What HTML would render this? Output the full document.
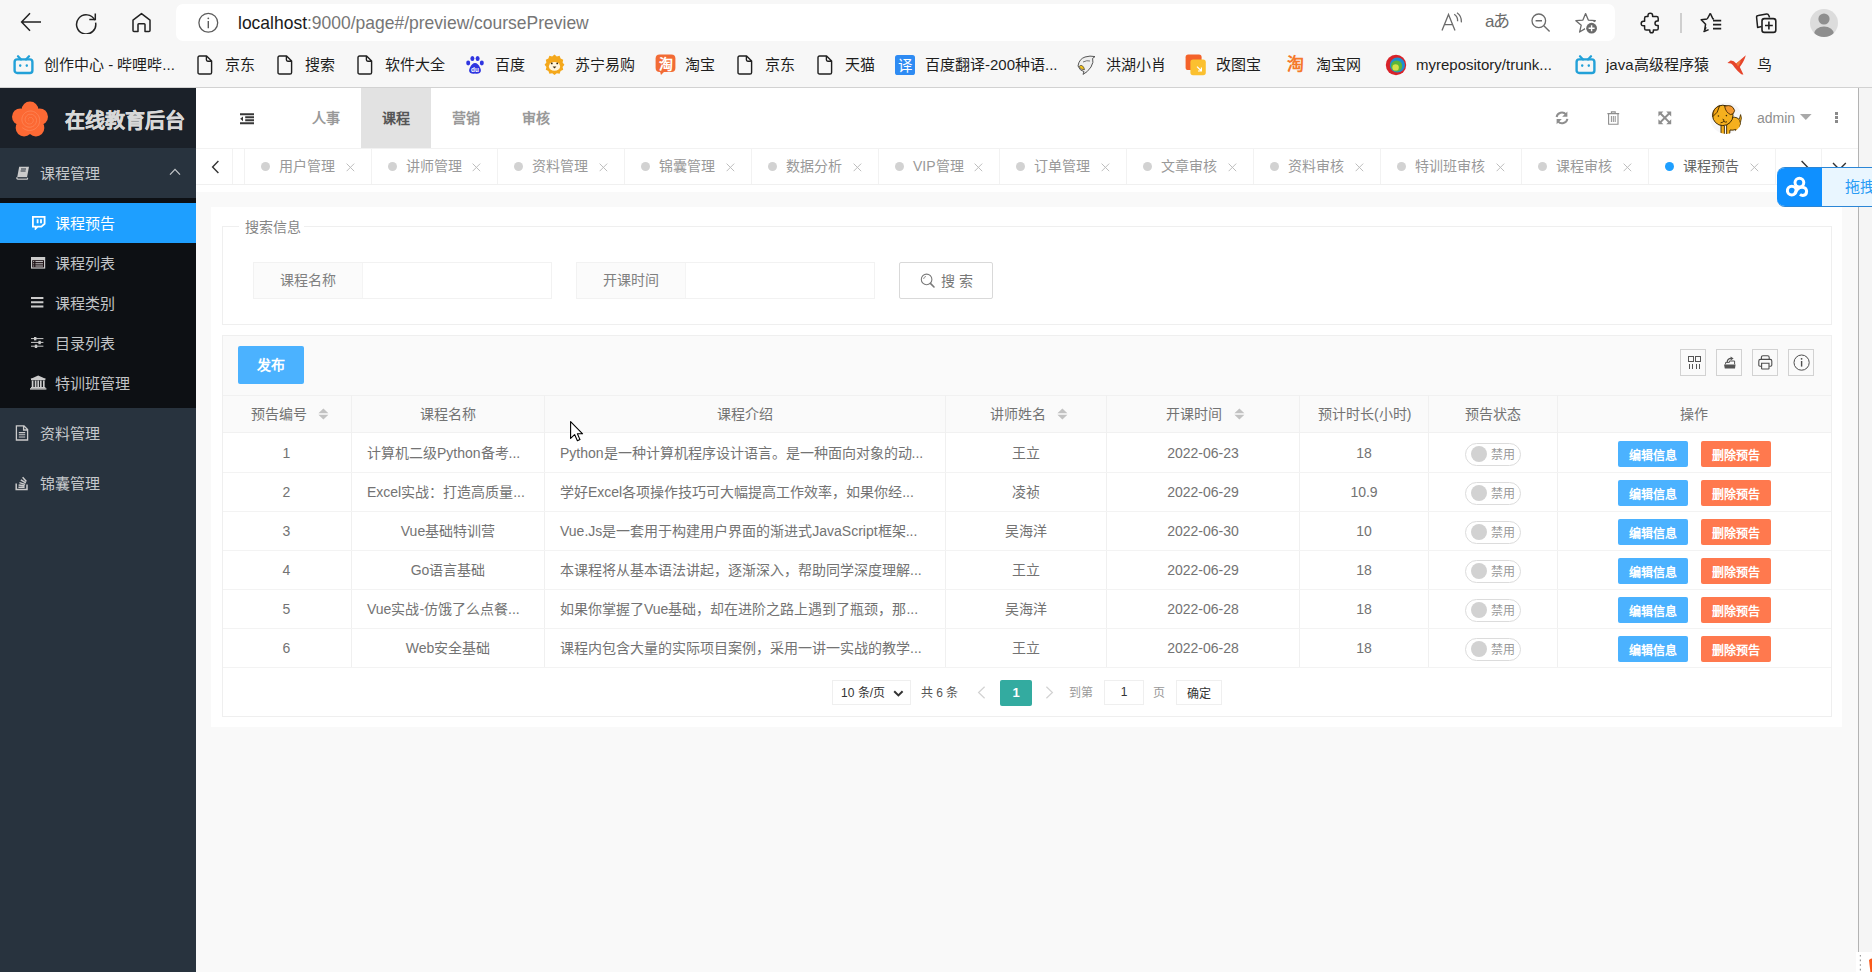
<!DOCTYPE html>
<html lang="zh-CN"><head><meta charset="utf-8">
<style>
*{box-sizing:border-box;margin:0;padding:0}
html,body{width:1872px;height:972px;overflow:hidden;background:#f7f7f7;font-family:"Liberation Sans",sans-serif;color:#666}
.a{position:absolute}
svg{display:block}
/* browser chrome */
#chrome{position:absolute;left:0;top:0;width:1872px;height:88px;background:#f7f7f7;border-bottom:1px solid #d2d2d2}
#addr{position:absolute;left:176px;top:4px;width:1439px;height:37px;background:#fff;border-radius:7px}
.url{position:absolute;left:238px;top:11.5px;font-size:18.6px;color:#767676;white-space:nowrap;letter-spacing:0;transform:scaleX(0.94);transform-origin:0 0}
.url b{font-weight:normal;color:#1a1a1a}
.bm{position:absolute;top:56px;font-size:15px;color:#1e1e1e;white-space:nowrap;line-height:18px}
.bmi{position:absolute;top:54px}
/* app */
#side{position:absolute;left:0;top:88px;width:196px;height:884px;background:#28333e}
#logo{position:absolute;left:0;top:0;width:196px;height:60px;background:#1b2129}
.title{position:absolute;left:65px;top:17px;font-size:20px;font-weight:bold;color:#d8d8d8;-webkit-text-stroke:0.35px #d8d8d8;letter-spacing:0px;white-space:nowrap}
.nav1{position:absolute;left:0;width:196px;height:50px;font-size:15px;color:#c6c9cc;line-height:50px}
.nav1 .t{position:absolute;left:40px;top:1px}
#sub{position:absolute;left:0;top:110px;width:196px;height:210px;background:#0d1014}
.nav2{position:absolute;left:0;width:196px;height:40px;font-size:15px;color:#c2c4c6;line-height:40px}
.nav2 .t{position:absolute;left:55px;top:1px}
.nav2.on{background:#1e9fff;color:#fff}
#main{position:absolute;left:196px;top:88px;width:1662px;height:884px;background:#f9f9f9}
#hdr{position:absolute;left:0;top:0;width:1662px;height:61px;background:#fff;border-bottom:1px solid #f2f2f2}
.hn{position:absolute;top:0;height:60px;width:70px;line-height:60px;text-align:center;font-size:14px;color:#999;font-weight:bold}
.hn.on{background:#e2e2e2;color:#555}
#tabs{position:absolute;left:0;top:61px;width:1662px;height:43px;background:#fff}
.tbar{position:absolute;left:0;top:0;width:1662px;height:36px;border-bottom:1px solid #f0f0f0}
.tab{position:absolute;top:0;height:35px;border-right:1px solid #f2f2f2;font-size:14px;color:#999;line-height:35px;white-space:nowrap}
.tab .d{position:absolute;left:16px;top:13px;width:9px;height:9px;border-radius:50%;background:#d2d2d2}
.tab .t{position:absolute;left:34px;top:0}
.tab .x{position:absolute;top:14px;width:9px;height:9px}
#card{position:absolute;left:15px;top:119px;width:1631px;height:520px;background:#fff}
#rightbar{position:absolute;left:1858px;top:88px;width:14px;height:864px;background:#f5f5f5;border-left:1px solid #b3b3b3}
</style></head><body>
<div id="chrome">
  <div id="addr"></div>
  <svg class="a" style="left:20px;top:12px" width="22" height="20" viewBox="0 0 22 20"><path d="M10 1.2 L1.6 10 L10 18.8 M1.6 10 H21" fill="none" stroke="#222" stroke-width="1.5" stroke-linejoin="miter"/></svg>
  <svg class="a" style="left:74px;top:11px" width="24" height="23" viewBox="0 0 24 23"><path d="M20.8 9.2 A9.6 9.6 0 1 0 21.6 11.6" fill="none" stroke="#222" stroke-width="1.5"/><path d="M21.3 2.6 V8.6 H15.3" fill="none" stroke="#222" stroke-width="1.5"/></svg>
  <svg class="a" style="left:131px;top:12px" width="21" height="21" viewBox="0 0 21 21"><path d="M2 8.2 L10.5 1.6 L19 8.2 V18.4 Q19 19.4 18 19.4 H14 V12.6 Q14 11.8 13.2 11.8 H7.8 Q7 11.8 7 12.6 V19.4 H3 Q2 19.4 2 18.4 Z" fill="none" stroke="#222" stroke-width="1.5" stroke-linejoin="round"/></svg>
  <svg class="a" style="left:197px;top:12px" width="23" height="23" viewBox="0 0 23 23"><circle cx="11.3" cy="10.8" r="9.4" fill="none" stroke="#5c5c5c" stroke-width="1.3"/><path d="M11.3 9 V16.2" stroke="#5c5c5c" stroke-width="1.4"/><circle cx="11.3" cy="6.3" r="0.9" fill="#5c5c5c"/></svg>
  <div class="url"><b>localhost</b>:9000/page#/preview/coursePreview</div>
  <svg class="a" style="left:13px;top:55px" width="21" height="20" viewBox="0 0 21 20"><path d="M5 1.2 L8 4.4 M16 1.2 L13 4.4" stroke="#23a1d8" stroke-width="2.2" stroke-linecap="round"/><rect x="1.6" y="4.4" width="17.8" height="13.6" rx="2.6" fill="none" stroke="#23a1d8" stroke-width="2.4"/><ellipse cx="7.2" cy="10.6" rx="1.2" ry="1.4" fill="#23a1d8"/><ellipse cx="13.8" cy="10.6" rx="1.2" ry="1.4" fill="#23a1d8"/></svg>
  <div class="bm" style="left:44px">创作中心 - 哔哩哔...</div>
  <svg class="a" style="left:197px;top:55px" width="16" height="20" viewBox="0 0 16 20"><path d="M2.6 1 H9.6 L14.6 6 V17.4 Q14.6 19 13 19 H2.6 Q1 19 1 17.4 V2.6 Q1 1 2.6 1 Z M9.4 1.2 V4.8 Q9.4 6.2 10.8 6.2 H14.4" fill="none" stroke="#1f1f1f" stroke-width="1.4" stroke-linejoin="round"/></svg>
  <div class="bm" style="left:225px">京东</div>
  <svg class="a" style="left:277px;top:55px" width="16" height="20" viewBox="0 0 16 20"><path d="M2.6 1 H9.6 L14.6 6 V17.4 Q14.6 19 13 19 H2.6 Q1 19 1 17.4 V2.6 Q1 1 2.6 1 Z M9.4 1.2 V4.8 Q9.4 6.2 10.8 6.2 H14.4" fill="none" stroke="#1f1f1f" stroke-width="1.4" stroke-linejoin="round"/></svg>
  <div class="bm" style="left:305px">搜索</div>
  <svg class="a" style="left:357px;top:55px" width="16" height="20" viewBox="0 0 16 20"><path d="M2.6 1 H9.6 L14.6 6 V17.4 Q14.6 19 13 19 H2.6 Q1 19 1 17.4 V2.6 Q1 1 2.6 1 Z M9.4 1.2 V4.8 Q9.4 6.2 10.8 6.2 H14.4" fill="none" stroke="#1f1f1f" stroke-width="1.4" stroke-linejoin="round"/></svg>
  <div class="bm" style="left:385px">软件大全</div>
  <svg class="a" style="left:465px;top:55px" width="20" height="20" viewBox="0 0 20 20"><ellipse cx="3.2" cy="8" rx="2" ry="2.4" fill="#2f35e0"/><ellipse cx="7.4" cy="3.4" rx="2" ry="2.5" fill="#2f35e0"/><ellipse cx="12.6" cy="3.4" rx="2" ry="2.5" fill="#2f35e0"/><ellipse cx="16.8" cy="8" rx="2" ry="2.4" fill="#2f35e0"/><path d="M10 8 Q7 8 5 12.6 Q3 16.4 5.4 18 Q7.4 19 10 18.4 Q12.6 19 14.6 18 Q17 16.4 15 12.6 Q13 8 10 8Z" fill="#2f35e0"/><text x="10" y="17.2" font-size="6.4" fill="#fff" text-anchor="middle" font-family="Liberation Sans" font-weight="bold">du</text></svg>
  <div class="bm" style="left:495px">百度</div>
  <svg class="a" style="left:544px;top:54px" width="21" height="21" viewBox="0 0 21 21"><path d="M10.5 0.6 L12.8 2.4 L15.6 1.8 L16.6 4.6 L19.2 5.8 L18.6 8.6 L20.4 10.8 L18.6 13 L19.2 15.8 L16.6 17 L15.6 19.8 L12.8 19.2 L10.5 21 L8.2 19.2 L5.4 19.8 L4.4 17 L1.8 15.8 L2.4 13 L0.6 10.8 L2.4 8.6 L1.8 5.8 L4.4 4.6 L5.4 1.8 L8.2 2.4Z" fill="#f4a81c"/><ellipse cx="10.5" cy="12.4" rx="5.6" ry="4.4" fill="#fff4dc"/><circle cx="7.8" cy="9.4" r="0.9" fill="#3a2a10"/><circle cx="13.2" cy="9.4" r="0.9" fill="#3a2a10"/><path d="M8.6 12.4 H12.4 L10.5 14.6Z" fill="#3a2a10"/></svg>
  <div class="bm" style="left:575px">苏宁易购</div>
  <svg class="a" style="left:655px;top:54px" width="21" height="22" viewBox="0 0 21 22"><rect x="0.6" y="0.6" width="19.8" height="17.4" rx="4" fill="#f26b35"/><path d="M5 17.6 L6 21 L9.4 17.6Z" fill="#f26b35"/><text x="10.5" y="15" font-size="14" fill="#fff" text-anchor="middle" font-weight="bold">淘</text></svg>
  <div class="bm" style="left:685px">淘宝</div>
  <svg class="a" style="left:737px;top:55px" width="16" height="20" viewBox="0 0 16 20"><path d="M2.6 1 H9.6 L14.6 6 V17.4 Q14.6 19 13 19 H2.6 Q1 19 1 17.4 V2.6 Q1 1 2.6 1 Z M9.4 1.2 V4.8 Q9.4 6.2 10.8 6.2 H14.4" fill="none" stroke="#1f1f1f" stroke-width="1.4" stroke-linejoin="round"/></svg>
  <div class="bm" style="left:765px">京东</div>
  <svg class="a" style="left:817px;top:55px" width="16" height="20" viewBox="0 0 16 20"><path d="M2.6 1 H9.6 L14.6 6 V17.4 Q14.6 19 13 19 H2.6 Q1 19 1 17.4 V2.6 Q1 1 2.6 1 Z M9.4 1.2 V4.8 Q9.4 6.2 10.8 6.2 H14.4" fill="none" stroke="#1f1f1f" stroke-width="1.4" stroke-linejoin="round"/></svg>
  <div class="bm" style="left:845px">天猫</div>
  <svg class="a" style="left:895px;top:55px" width="20" height="20" viewBox="0 0 20 20"><rect x="0" y="0" width="20" height="20" rx="2.6" fill="#2e8bf3"/><text x="10" y="15.6" font-size="14.5" fill="#fff" text-anchor="middle">译</text></svg>
  <div class="bm" style="left:925px">百度翻译-200种语...</div>
  <svg class="a" style="left:1075px;top:54px" width="22" height="22" viewBox="0 0 22 22"><path d="M3 12 Q4 5 10 3 Q15 1.4 20 2.6 L17.6 4.4 Q19 8 16 13 Q12.4 18.4 8 20.4 L9 17.6 Q5 17 3 12Z" fill="#eee" stroke="#555" stroke-width="1"/><path d="M4 12.6 Q6 16.4 9.6 15.6 Q9 12 6 11.2Z" fill="#f3c21a" stroke="#444" stroke-width="0.7"/><path d="M8 8 Q12 6 15 7" fill="none" stroke="#555" stroke-width="0.8"/></svg>
  <div class="bm" style="left:1106px">洪湖小肖</div>
  <svg class="a" style="left:1185px;top:54px" width="22" height="22" viewBox="0 0 22 22"><rect x="0.6" y="0.6" width="16" height="15.4" rx="2.6" fill="#f4622a"/><rect x="5.4" y="5.6" width="15.4" height="15.6" rx="2.6" fill="#fbc02f"/><path d="M12 12.6 L16.4 17 M16.4 13.6 V17 H13" fill="none" stroke="#fff" stroke-width="1.2"/></svg>
  <div class="bm" style="left:1216px">改图宝</div>
  <div class="a" style="left:1287px;top:55px;font-size:17px;font-weight:bold;color:#f5792a;line-height:20px">淘</div>
  <div class="bm" style="left:1316px">淘宝网</div>
  <svg class="a" style="left:1385px;top:54px" width="22" height="22" viewBox="0 0 22 22"><circle cx="11" cy="11" r="10.2" fill="#d8232a"/><circle cx="12.4" cy="11" r="7.6" fill="#1e8fd0"/><circle cx="11.6" cy="12" r="5.6" fill="#5cb53a"/><circle cx="10.6" cy="13.4" r="3.2" fill="#d6e04a"/></svg>
  <div class="bm" style="left:1416px">myrepository/trunk...</div>
  <svg class="a" style="left:1575px;top:55px" width="21" height="20" viewBox="0 0 21 20"><path d="M5 1.2 L8 4.4 M16 1.2 L13 4.4" stroke="#23a1d8" stroke-width="2.2" stroke-linecap="round"/><rect x="1.6" y="4.4" width="17.8" height="13.6" rx="2.6" fill="none" stroke="#23a1d8" stroke-width="2.4"/><ellipse cx="7.2" cy="10.6" rx="1.2" ry="1.4" fill="#23a1d8"/><ellipse cx="13.8" cy="10.6" rx="1.2" ry="1.4" fill="#23a1d8"/></svg>
  <div class="bm" style="left:1606px">java高级程序猿</div>
  <svg class="a" style="left:1727px;top:54px" width="21" height="22" viewBox="0 0 21 22"><path d="M0.4 9 L3.6 6.6 Q6.8 6.4 9.2 9.4 L18.8 1.2 Q17.6 6.4 12.8 13 L16.4 20.6 Q14.8 20.6 13.4 19.4 Q10 16.4 7.6 13.4 Q5.8 10.8 4 9.6 Z" fill="#e6452b"/><path d="M9.2 9.4 L14 6 Q13 10 11 12.6Z" fill="#f07a3a"/></svg>
  <div class="bm" style="left:1757px">鸟</div>
  <!-- right address icons -->
  <svg class="a" style="left:1441px;top:12px" width="22" height="20" viewBox="0 0 22 20"><path d="M1 18.5 L7.5 2.5 L14 18.5 M3.6 12.6 H11.4" fill="none" stroke="#6b6b6b" stroke-width="1.3"/><path d="M13.2 2.2 Q17 4.8 16.6 9.2 M16 0.8 Q20.8 4 20.4 10.4" fill="none" stroke="#6b6b6b" stroke-width="1.3"/></svg>
  <div class="a" style="left:1485px;top:11px;font-size:17px;color:#6b6b6b;line-height:22px;letter-spacing:-1.5px">aあ</div>
  <svg class="a" style="left:1531px;top:13px" width="20" height="19" viewBox="0 0 20 19"><circle cx="7.8" cy="7.8" r="6.8" fill="none" stroke="#6b6b6b" stroke-width="1.3"/><path d="M4.6 7.8 H11 M12.8 12.8 L18.6 18.4" stroke="#6b6b6b" stroke-width="1.4"/></svg>
  <svg class="a" style="left:1575px;top:12px" width="24" height="23" viewBox="0 0 24 23"><path d="M10.60 1.60 L13.30 8.08 L20.30 8.65 L14.97 13.22 L16.60 20.05 L10.60 16.40 L4.60 20.05 L6.23 13.22 L0.90 8.65 L7.90 8.08Z" fill="none" stroke="#6b6b6b" stroke-width="1.3" stroke-linejoin="round"/><circle cx="16.6" cy="16.2" r="6.6" fill="#fff"/><circle cx="16.6" cy="16.2" r="5.4" fill="#6b6b6b"/><path d="M16.6 13.2 V19.2 M13.6 16.2 H19.6" stroke="#fff" stroke-width="1.4"/></svg>
  <!-- toolbar right -->
  <svg class="a" style="left:1640px;top:12px" width="21" height="22" viewBox="0 0 21 22"><path d="M8 3.4 Q8 1.2 10.3 1.2 Q12.6 1.2 12.6 3.4 V4.6 H16.6 Q18.2 4.6 18.2 6.2 V9 H17.2 Q15 9 15 11.3 Q15 13.6 17.2 13.6 H18.2 V16.4 Q18.2 18 16.6 18 H13.4 V19 Q13.4 20.8 11.6 20.8 Q9.8 20.8 9.8 19 V18 H6.2 Q4.6 18 4.6 16.4 V13.8 H3.4 Q1.2 13.8 1.2 11.5 Q1.2 9.2 3.4 9.2 H4.6 V6.2 Q4.6 4.6 6.2 4.6 H8 Z" fill="none" stroke="#1f1f1f" stroke-width="1.5" stroke-linejoin="round"/></svg>
  <div class="a" style="left:1680px;top:13px;width:2px;height:20px;background:#cfcfcf"></div>
  <svg class="a" style="left:1700px;top:12px" width="23" height="21" viewBox="0 0 23 21"><path d="M10.3 1.4 L12.9 6.8 L14 7" fill="none" stroke="#1f1f1f" stroke-width="1.5"/><path d="M6 15.2 L4 19.6 L8.6 17.6 M7.2 7 L1.2 7.8 L5.6 12.2 L4.6 18.2 M10.3 1.4 L7.2 7" fill="none" stroke="#1f1f1f" stroke-width="1.5" stroke-linejoin="round"/><path d="M13 8.6 H21.2 M13 12.6 H21.2 M13 16.6 H21.2" stroke="#1f1f1f" stroke-width="1.6"/></svg>
  <svg class="a" style="left:1755px;top:12px" width="23" height="22" viewBox="0 0 23 22"><path d="M6.6 14.6 L2.6 15.4 L1.6 5.4 Q1.4 3.6 3.2 3.4 L11.6 2 Q13.2 1.8 13.8 3.4 L14.6 5.6" fill="none" stroke="#1f1f1f" stroke-width="1.5" stroke-linejoin="round"/><rect x="7" y="6.6" width="13.8" height="13.8" rx="2.4" fill="#f7f7f7" stroke="#1f1f1f" stroke-width="1.6"/><path d="M13.9 9.6 V17.4 M10 13.5 H17.8" stroke="#1f1f1f" stroke-width="1.6"/></svg>
  <svg class="a" style="left:1809px;top:8px" width="30" height="30" viewBox="0 0 30 30"><defs><clipPath id="pc"><circle cx="15" cy="15" r="14"/></clipPath></defs><circle cx="15" cy="15" r="14" fill="#dcdcdc"/><g clip-path="url(#pc)"><circle cx="15" cy="11" r="5.6" fill="#8e8e8e"/><ellipse cx="15" cy="26" rx="10" ry="7.4" fill="#8e8e8e"/></g></svg>
</div>

<div id="side">
  <div id="logo"><svg class="a" style="left:11px;top:12px" width="38" height="38" viewBox="0 0 37 37"><circle cx="18.5" cy="19.4" r="11" fill="#fc6934"/><circle cx="18.50" cy="9.60" r="8.2" fill="#fc6934"/><circle cx="27.82" cy="16.37" r="8.2" fill="#fc6934"/><circle cx="24.26" cy="27.33" r="8.2" fill="#fc6934"/><circle cx="12.74" cy="27.33" r="8.2" fill="#fc6934"/><circle cx="9.18" cy="16.37" r="8.2" fill="#fc6934"/><path d="M18.50 19.40 L18.52 19.40 L18.54 19.40 L18.56 19.41 L18.58 19.41 L18.60 19.42 L18.62 19.43 L18.63 19.44 L18.65 19.45 L18.67 19.46 L18.68 19.48 L18.70 19.49 L18.71 19.51 L18.73 19.53 L18.74 19.55 L18.75 19.57 L18.76 19.59 L18.76 19.61 L18.77 19.64 L18.78 19.66 L18.78 19.69 L18.78 19.71 L18.78 19.74 L18.78 19.77 L18.78 19.79 L18.77 19.82 L18.76 19.85 L18.75 19.88 L18.74 19.90 L18.73 19.93 L18.72 19.96 L18.70 19.99 L18.68 20.01 L18.66 20.04 L18.64 20.06 L18.62 20.09 L18.59 20.11 L18.57 20.14 L18.54 20.16 L18.51 20.18 L18.48 20.20 L18.44 20.22 L18.41 20.23 L18.37 20.25 L18.33 20.26 L18.30 20.28 L18.26 20.29 L18.21 20.30 L18.17 20.30 L18.13 20.31 L18.08 20.31 L18.04 20.31 L17.99 20.31 L17.95 20.30 L17.90 20.30 L17.85 20.29 L17.81 20.28 L17.76 20.27 L17.71 20.25 L17.66 20.23 L17.62 20.21 L17.57 20.19 L17.52 20.16 L17.48 20.13 L17.43 20.10 L17.39 20.07 L17.34 20.03 L17.30 20.00 L17.26 19.96 L17.22 19.91 L17.18 19.87 L17.14 19.82 L17.11 19.77 L17.08 19.72 L17.04 19.67 L17.02 19.61 L16.99 19.55 L16.96 19.49 L16.94 19.43 L16.92 19.37 L16.90 19.31 L16.89 19.24 L16.88 19.17 L16.87 19.11 L16.86 19.04 L16.86 18.97 L16.86 18.89 L16.86 18.82 L16.86 18.75 L16.87 18.68 L16.89 18.60 L16.90 18.53 L16.92 18.46 L16.94 18.38 L16.97 18.31 L17.00 18.24 L17.03 18.17 L17.07 18.09 L17.10 18.02 L17.15 17.95 L17.19 17.89 L17.24 17.82 L17.29 17.75 L17.35 17.69 L17.41 17.63 L17.47 17.57 L17.54 17.51 L17.60 17.46 L17.67 17.40 L17.75 17.35 L17.82 17.31 L17.90 17.26 L17.98 17.22 L18.07 17.18 L18.15 17.15 L18.24 17.11 L18.33 17.09 L18.42 17.06 L18.52 17.04 L18.61 17.02 L18.71 17.01 L18.81 17.00 L18.91 16.99 L19.01 16.99 L19.11 17.00 L19.21 17.00 L19.31 17.01 L19.41 17.03 L19.51 17.05 L19.62 17.07 L19.72 17.10 L19.82 17.14 L19.92 17.17 L20.02 17.22 L20.12 17.26 L20.21 17.31 L20.31 17.37 L20.40 17.43 L20.49 17.49 L20.58 17.56 L20.67 17.63 L20.76 17.71 L20.84 17.79 L20.92 17.87 L20.99 17.96 L21.07 18.05 L21.14 18.15 L21.20 18.25 L21.27 18.35 L21.33 18.45 L21.38 18.56 L21.43 18.67 L21.48 18.79 L21.52 18.90 L21.56 19.02 L21.59 19.14 L21.62 19.27 L21.64 19.39 L21.66 19.52 L21.67 19.64 L21.68 19.77 L21.68 19.90 L21.68 20.03 L21.67 20.16 L21.66 20.30 L21.64 20.43 L21.61 20.56 L21.58 20.69 L21.54 20.82 L21.50 20.95 L21.46 21.08 L21.40 21.21 L21.35 21.33 L21.28 21.46 L21.21 21.58 L21.14 21.70 L21.06 21.82 L20.97 21.93 L20.88 22.04 L20.79 22.15 L20.69 22.26 L20.59 22.36 L20.48 22.46 L20.36 22.55 L20.24 22.64 L20.12 22.73 L20.00 22.81 L19.87 22.88 L19.73 22.95 L19.60 23.02 L19.45 23.08 L19.31 23.13 L19.16 23.18 L19.02 23.23 L18.86 23.26 L18.71 23.29 L18.55 23.32 L18.40 23.34 L18.24 23.35 L18.08 23.36 L17.92 23.36 L17.76 23.35 L17.59 23.34 L17.43 23.32 L17.27 23.29 L17.11 23.26 L16.95 23.22 L16.79 23.17 L16.63 23.12 L16.47 23.06 L16.32 22.99 L16.17 22.92 L16.02 22.84 L15.87 22.75 L15.72 22.66 L15.58 22.56 L15.44 22.45 L15.31 22.34 L15.18 22.22 L15.05 22.10 L14.93 21.97 L14.81 21.84 L14.70 21.70 L14.60 21.56 L14.50 21.41 L14.40 21.25 L14.31 21.10 L14.23 20.93 L14.15 20.77 L14.08 20.60 L14.02 20.43 L13.96 20.25 L13.91 20.07 L13.87 19.89 L13.83 19.70 L13.80 19.52 L13.78 19.33 L13.77 19.14 L13.76 18.95 L13.76 18.76 L13.77 18.56 L13.79 18.37 L13.82 18.18 L13.85 17.99 L13.89 17.79 L13.94 17.60 L14.00 17.42 L14.06 17.23 L14.14 17.04 L14.22 16.86 L14.30 16.68 L14.40 16.50 L14.50 16.33 L14.61 16.16 L14.73 15.99 L14.86 15.83 L14.99 15.67 L15.13 15.52 L15.27 15.37 L15.42 15.23 L15.58 15.10 L15.75 14.97 L15.92 14.84 L16.09 14.72 L16.27 14.61 L16.46 14.51 L16.65 14.41 L16.84 14.32 L17.04 14.24 L17.24 14.17 L17.45 14.10 L17.66 14.05 L17.87 14.00 L18.09 13.96 L18.31 13.92 L18.52 13.90 L18.75 13.89 L18.97 13.88 L19.19 13.88 L19.41 13.90 L19.64 13.92 L19.86 13.95 L20.08 13.99 L20.30 14.04 L20.52 14.09 L20.74 14.16 L20.96 14.24 L21.17 14.32 L21.38 14.41 L21.59 14.52 L21.80 14.63 L22.00 14.75 L22.19 14.88 L22.38 15.01 L22.57 15.16 L22.75 15.31 L22.93 15.47 L23.09 15.64 L23.26 15.81 L23.41 15.99 L23.56 16.18 L23.71 16.38 L23.84 16.58 L23.97 16.78 L24.08 17.00 L24.20 17.21 L24.30 17.44 L24.39 17.67 L24.47 17.90 L24.55 18.13 L24.61 18.37 L24.67 18.62 L24.72 18.86 L24.75 19.11 L24.78 19.36 L24.80 19.61 L24.80 19.86 L24.80 20.12 L24.79 20.37 L24.76 20.63 L24.73 20.88 L24.68 21.13 L24.63 21.39 L24.56 21.64 L24.48 21.89 L24.40 22.13 L24.30 22.37 L24.20 22.61 L24.08 22.85 L23.95 23.08 L23.82 23.31 L23.67 23.53 L23.52 23.75 L23.36 23.96 L23.18 24.16 L23.00 24.36 L22.81 24.55 L22.62 24.74 L22.41 24.91 L22.20 25.08 L21.98 25.24 L21.75 25.39 L21.52 25.54 L21.28 25.67 L21.03 25.80 L20.78 25.91 L20.53 26.02 L20.27 26.11 L20.00 26.20 L19.73 26.27 L19.46 26.33 L19.18 26.39 L18.90 26.43 L18.62 26.46 L18.34 26.48 L18.05 26.49 L17.77 26.48 L17.48 26.47 L17.20 26.44 L16.91 26.40 L16.63 26.35 L16.35 26.29 L16.07 26.22 L15.79 26.13 L15.51 26.04 L15.24 25.93 L14.97 25.81 L14.71 25.68 L14.45 25.54 L14.19 25.39 L13.95 25.23 L13.70 25.06 L13.47 24.88 L13.24 24.69 L13.02 24.49 L12.80 24.28 L12.60 24.06 L12.40 23.83 L12.21 23.59 L12.03 23.35 L11.86 23.10 L11.70 22.84 L11.55 22.57 L11.41 22.30 L11.28 22.02 L11.16 21.73 L11.06 21.44 L10.96 21.15 L10.88 20.85 L10.81 20.55 L10.75 20.24 L10.70 19.93 L10.66 19.62 L10.64 19.31 L10.63 18.99 L10.63 18.67 L10.65 18.36 L10.68 18.04 L10.72 17.72 L10.77 17.41 L10.84 17.10 L10.92 16.79 L11.01 16.48 L11.11 16.17 L11.23 15.87 L11.36 15.57 L11.50 15.28 L11.66 14.99 L11.82 14.71 L12.00 14.44 L12.19 14.17 L12.39 13.91 L12.60 13.65 L12.82 13.41 L13.05 13.17 L13.29 12.94 L13.54 12.72 L13.80 12.51 L14.07 12.31 L14.35 12.12 L14.63 11.94 L14.92 11.78 L15.22 11.62 L15.53 11.48 L15.84 11.35 L16.16 11.23 L16.49 11.12 L16.81 11.03 L17.15 10.95 L17.48 10.88 L17.82 10.83 L18.17 10.79 L18.51 10.76 L18.86 10.75 L19.20 10.75 L19.55 10.76 L19.90 10.79 L20.25 10.84 L20.59 10.89 L20.94 10.96 L21.28 11.05 L21.62 11.15 L21.95 11.26 L22.28 11.39 L22.61 11.53 L22.93 11.68 L23.25 11.85 L23.56 12.03 L23.86 12.22 L24.16 12.42 L24.44 12.64 L24.72 12.87 L24.99 13.11 L25.25 13.36 L25.51 13.62 L25.75 13.90 L25.98 14.18 L26.20 14.47 L26.41 14.77 L26.60 15.08 L26.79 15.40 L26.96 15.73 L27.12 16.06 L27.26 16.40 L27.39 16.75 L27.51 17.10 L27.62 17.46 L27.71 17.82 L27.78 18.19 L27.84 18.56 L27.89 18.93 L27.92 19.31 L27.94 19.69 L27.94 20.07 L27.92 20.44 L27.89 20.82 L27.85 21.20 L27.79 21.58 L27.71 21.95 L27.62 22.33 L27.52 22.70 L27.40 23.06 L27.26 23.42 L27.11 23.78 L26.95 24.13 L26.77 24.47 L26.57 24.81 L26.37 25.14 L26.15 25.46 L25.91 25.78 L25.67 26.08 L25.41 26.38 L25.14 26.66 L24.85 26.94 L24.56 27.20 L24.26 27.46 L23.94 27.70 L23.61 27.92 L23.28 28.14 L22.93 28.34 L22.58 28.53 L22.22 28.70 L21.85 28.86 L21.48 29.01 L21.09 29.14 L20.71 29.26 L20.32 29.36 L19.92 29.44 L19.52 29.51 L19.11 29.56 L18.71 29.60 L18.30 29.62 L17.89 29.62 L17.48 29.61 L17.07 29.58 L16.66 29.53 L16.25 29.47 L15.85 29.39 L15.44 29.30 L15.04 29.19 L14.65 29.06 L14.25 28.92 L13.87 28.76 L13.49 28.58 L13.12 28.39 L12.75 28.18 L12.39 27.96 L12.04 27.73 L11.70 27.48 L11.37 27.22 L11.05 26.94" fill="none" stroke="#fd9064" stroke-width="0.7"/></svg><div class="title">在线教育后台</div></div>
  <div class="nav1" style="top:60px"><svg class="a" style="left:16px;top:18px" width="14" height="14" viewBox="0 0 14 14"><path d="M3.2 0.8 H13 L11 11.2 H1.2 Z" fill="#cbcbcb"/><path d="M1.2 11.2 Q0.4 12.6 1.6 13 H11.2 L11.6 11.8" fill="none" stroke="#cbcbcb" stroke-width="1.3"/><path d="M5 3 H10 M4.6 5 H9.6" stroke="#28333e" stroke-width="1"/><path d="M1.8 12 H11" stroke="#28333e" stroke-width="0.8"/></svg><svg class="a" style="left:169px;top:20px" width="12" height="8" viewBox="0 0 12 8"><path d="M1 6.6 L6 1.4 L11 6.6" fill="none" stroke="#c3c6c9" stroke-width="1.3"/></svg><span class="t">课程管理</span></div>
  <div id="sub">
    <div class="nav2 on" style="top:5px"><svg class="a" style="left:32px;top:13px" width="14" height="14" viewBox="0 0 14 14"><path d="M0.9 0.9 H12.6 V7.8 L9.4 10.6 H5.6 L3.6 12.6 V10.6 H0.9 Z" fill="none" stroke="#fff" stroke-width="1.8" stroke-linejoin="miter"/><path d="M5.6 3.2 V7.2 M9 3.2 V7.2" stroke="#fff" stroke-width="1.8"/></svg><span class="t">课程预告</span></div>
    <div class="nav2" style="top:45px"><svg class="a" style="left:31px;top:14px" width="15" height="12" viewBox="0 0 15 12"><rect x="0" y="0" width="14.2" height="11.6" fill="#cbcbcb"/><rect x="1.2" y="3.2" width="11.8" height="7.2" fill="#1c1014"/><path d="M2.2 4.6 H3.2 M4.4 4.6 H12 M2.2 6.8 H3.2 M4.4 6.8 H12 M2.2 9 H3.2 M4.4 9 H12" stroke="#cbcbcb" stroke-width="1"/></svg><span class="t">课程列表</span></div>
    <div class="nav2" style="top:85px"><svg class="a" style="left:31px;top:14px" width="13" height="11" viewBox="0 0 13 11"><path d="M0 1 H12.4 M0 5.2 H12.4 M0 9.4 H12.4" stroke="#cbcbcb" stroke-width="2"/></svg><span class="t">课程类别</span></div>
    <div class="nav2" style="top:125px"><svg class="a" style="left:31px;top:14px" width="13" height="12" viewBox="0 0 13 12"><path d="M0 1.6 H12.4 M0 5.4 H12.4 M0 9.2 H12.4" stroke="#cbcbcb" stroke-width="1"/><rect x="3" y="0" width="2.4" height="3.4" fill="#cbcbcb"/><rect x="7.4" y="3.8" width="2.4" height="3.4" fill="#cbcbcb"/><rect x="3.8" y="7.6" width="2.4" height="3.4" fill="#cbcbcb"/></svg><span class="t">目录列表</span></div>
    <div class="nav2" style="top:165px"><svg class="a" style="left:30px;top:12px" width="17" height="16" viewBox="0 0 17 16"><path d="M8.2 0.4 L16 4 H0.4 Z" fill="#cbcbcb"/><rect x="1" y="3.6" width="14.4" height="1.6" fill="#cbcbcb"/><path d="M2.6 5.4 V12 M5.6 5.4 V12 M8.2 5.4 V12 M10.8 5.4 V12 M13.8 5.4 V12" stroke="#cbcbcb" stroke-width="1.7"/><rect x="1" y="12" width="14.4" height="1.2" fill="#cbcbcb"/><rect x="0" y="13.2" width="16.4" height="1.4" fill="#cbcbcb"/></svg><span class="t">特训班管理</span></div>
  </div>
  <div class="nav1" style="top:320px"><svg class="a" style="left:15px;top:17px" width="14" height="16" viewBox="0 0 14 16"><path d="M1.4 0.9 H9 L12.6 4.6 V15 H1.4 Z M8.6 1 V5 H12.6" fill="none" stroke="#cbcbcb" stroke-width="1.3"/><path d="M3.8 7.6 H10.2 M3.8 9.8 H10.2 M3.8 12 H10.2" stroke="#cbcbcb" stroke-width="1.1"/></svg><span class="t">资料管理</span></div>
  <div class="nav1" style="top:370px"><svg class="a" style="left:15px;top:17px" width="14" height="16" viewBox="0 0 14 16"><path d="M1.2 8.6 V14.4 H12 V9.4" fill="none" stroke="#cbcbcb" stroke-width="1.5"/><path d="M3.4 12.2 H9.6 M3.6 10 L9.6 10.8 M4.4 7.6 L10.2 9.4 M5.8 4.8 L10.8 7.8 M7.6 2.2 L11.4 6.4" stroke="#cbcbcb" stroke-width="1.5"/></svg><span class="t">锦囊管理</span></div>
</div>

<div id="main">
  <div id="hdr">
    <svg class="a" style="left:44px;top:25px" width="15" height="12" viewBox="0 0 15 12"><path d="M0 1.3 H14 M5.2 4.3 H14 M5.2 7.3 H14 M0 10.3 H14" stroke="#383838" stroke-width="2"/><path d="M0.2 5.8 L3 3.4 V8.2Z" fill="#383838"/></svg>
    <svg class="a" style="left:1359px;top:23px" width="14" height="14" viewBox="0 0 14 14"><path d="M1.6 6 A5.4 5.4 0 0 1 11 3.4" fill="none" stroke="#8e8e8e" stroke-width="2"/><path d="M12.4 0.6 V5.8 H7.2Z" fill="#8e8e8e"/><path d="M12.4 7.8 A5.4 5.4 0 0 1 3 10.4" fill="none" stroke="#8e8e8e" stroke-width="2"/><path d="M1.6 13.2 V8 H6.8Z" fill="#8e8e8e"/></svg>
    <svg class="a" style="left:1411px;top:23px" width="13" height="14" viewBox="0 0 13 14"><path d="M0.4 2.6 H12.2 M4.4 2.4 V0.9 H8.2 V2.4" fill="none" stroke="#8e8e8e" stroke-width="1.1"/><path d="M1.6 2.8 V13.2 H11 V2.8" fill="none" stroke="#8e8e8e" stroke-width="1.1"/><path d="M4.4 5 V11 M6.3 5 V11 M8.2 5 V11" stroke="#8e8e8e" stroke-width="1"/></svg>
    <svg class="a" style="left:1462px;top:23px" width="14" height="14" viewBox="0 0 14 14"><path d="M0.4 0.4 H5.4 L0.4 5.4Z M13.2 0.4 H8.2 L13.2 5.4Z M0.4 13.2 H5.4 L0.4 8.2Z M13.2 13.2 H8.2 L13.2 8.2Z" fill="#8e8e8e"/><path d="M2 2 L11.6 11.6 M11.6 2 L2 11.6" stroke="#8e8e8e" stroke-width="2"/></svg>
    <svg class="a" style="left:1514px;top:14px" width="33" height="33" viewBox="0 0 33 33"><circle cx="16.2" cy="16.2" r="15.8" fill="#f6f6f8"/><defs><clipPath id="dc"><circle cx="16.2" cy="16.2" r="15.8"/></clipPath></defs><g clip-path="url(#dc)">
<path d="M17 17 Q25 13 29.4 17.6 Q31.6 21 29.6 26 L28 31 H25.4 L25.8 27.4 Q23 28.6 20 28 L19.6 33 H16.6 L16.6 24Z" fill="#f5b01e" stroke="#3d2800" stroke-width="0.9"/>
<path d="M29.2 17.4 L30.6 12.6 Q32.2 15.6 30.6 20" fill="#f5b01e" stroke="#3d2800" stroke-width="0.8"/>
<path d="M11 22 V32.6 H14.4 V24" fill="#f5b01e" stroke="#3d2800" stroke-width="0.9"/>
<circle cx="12.8" cy="13.4" r="10.2" fill="#f5b01e" stroke="#3d2800" stroke-width="1"/>
<path d="M2.8 14.6 Q2.6 6 9.6 3.8 Q8.2 11.2 2.8 14.6Z" fill="#f2a215" stroke="#3d2800" stroke-width="0.9"/>
<path d="M14.6 4.2 Q22.6 1.8 24.6 8.6 Q24 12.6 20.6 12.6 Q15.8 10.6 14.6 4.2Z" fill="#f49a30" stroke="#3d2800" stroke-width="0.9"/>
<circle cx="8.4" cy="14" r="0.8" fill="#3d2800"/><circle cx="16.4" cy="13.6" r="0.8" fill="#3d2800"/>
<path d="M12.6 17.2 Q14.4 17 13.8 19.4 Q12.6 20.6 10.6 20.8 M13.8 19.4 Q15.4 20.6 17 19.8" fill="none" stroke="#3d2800" stroke-width="0.9"/></g></svg>
    <div class="a" style="left:1561px;top:22px;font-size:14px;color:#8f8f8f;line-height:16px">admin</div>
    <svg class="a" style="left:1604px;top:26px" width="12" height="7" viewBox="0 0 12 7"><path d="M0 0 H11.6 L5.8 6Z" fill="#a9a9a9"/></svg>
    <svg class="a" style="left:1639px;top:24px" width="3" height="12" viewBox="0 0 3 12"><rect x="0" y="0" width="3" height="3" fill="#8a8a8a"/><rect x="0" y="4" width="3" height="3" fill="#8a8a8a"/><rect x="0" y="8" width="3" height="3" fill="#8a8a8a"/></svg>
    <div class="hn" style="left:95px">人事</div>
    <div class="hn on" style="left:165px">课程</div>
    <div class="hn" style="left:235px">营销</div>
    <div class="hn" style="left:305px">审核</div>
  </div>
  <div id="tabs"><div class="tbar"><div class="tab" style="left:0;width:37px"><svg class="a" style="left:15px;top:11px" width="9" height="14" viewBox="0 0 9 14"><path d="M7.4 1 L1.6 7 L7.4 13" fill="none" stroke="#333" stroke-width="1.4"/></svg></div><div class="tab" style="left:37px;width:12px"></div><div class="tab" style="left:49px;width:127px"><div class="d" style="background:#d2d2d2"></div><span class="t" style="color:#999">用户管理</span><svg class="x" style="left:101px" width="9" height="9" viewBox="0 0 9 9"><path d="M0.6 0.6 L8.2 8.2 M8.2 0.6 L0.6 8.2" stroke="#bdbdbd" stroke-width="1"/></svg></div><div class="tab" style="left:176px;width:126px"><div class="d" style="background:#d2d2d2"></div><span class="t" style="color:#999">讲师管理</span><svg class="x" style="left:100px" width="9" height="9" viewBox="0 0 9 9"><path d="M0.6 0.6 L8.2 8.2 M8.2 0.6 L0.6 8.2" stroke="#bdbdbd" stroke-width="1"/></svg></div><div class="tab" style="left:302px;width:127px"><div class="d" style="background:#d2d2d2"></div><span class="t" style="color:#999">资料管理</span><svg class="x" style="left:101px" width="9" height="9" viewBox="0 0 9 9"><path d="M0.6 0.6 L8.2 8.2 M8.2 0.6 L0.6 8.2" stroke="#bdbdbd" stroke-width="1"/></svg></div><div class="tab" style="left:429px;width:127px"><div class="d" style="background:#d2d2d2"></div><span class="t" style="color:#999">锦囊管理</span><svg class="x" style="left:101px" width="9" height="9" viewBox="0 0 9 9"><path d="M0.6 0.6 L8.2 8.2 M8.2 0.6 L0.6 8.2" stroke="#bdbdbd" stroke-width="1"/></svg></div><div class="tab" style="left:556px;width:127px"><div class="d" style="background:#d2d2d2"></div><span class="t" style="color:#999">数据分析</span><svg class="x" style="left:101px" width="9" height="9" viewBox="0 0 9 9"><path d="M0.6 0.6 L8.2 8.2 M8.2 0.6 L0.6 8.2" stroke="#bdbdbd" stroke-width="1"/></svg></div><div class="tab" style="left:683px;width:121px"><div class="d" style="background:#d2d2d2"></div><span class="t" style="color:#999">VIP管理</span><svg class="x" style="left:95px" width="9" height="9" viewBox="0 0 9 9"><path d="M0.6 0.6 L8.2 8.2 M8.2 0.6 L0.6 8.2" stroke="#bdbdbd" stroke-width="1"/></svg></div><div class="tab" style="left:804px;width:127px"><div class="d" style="background:#d2d2d2"></div><span class="t" style="color:#999">订单管理</span><svg class="x" style="left:101px" width="9" height="9" viewBox="0 0 9 9"><path d="M0.6 0.6 L8.2 8.2 M8.2 0.6 L0.6 8.2" stroke="#bdbdbd" stroke-width="1"/></svg></div><div class="tab" style="left:931px;width:127px"><div class="d" style="background:#d2d2d2"></div><span class="t" style="color:#999">文章审核</span><svg class="x" style="left:101px" width="9" height="9" viewBox="0 0 9 9"><path d="M0.6 0.6 L8.2 8.2 M8.2 0.6 L0.6 8.2" stroke="#bdbdbd" stroke-width="1"/></svg></div><div class="tab" style="left:1058px;width:127px"><div class="d" style="background:#d2d2d2"></div><span class="t" style="color:#999">资料审核</span><svg class="x" style="left:101px" width="9" height="9" viewBox="0 0 9 9"><path d="M0.6 0.6 L8.2 8.2 M8.2 0.6 L0.6 8.2" stroke="#bdbdbd" stroke-width="1"/></svg></div><div class="tab" style="left:1185px;width:141px"><div class="d" style="background:#d2d2d2"></div><span class="t" style="color:#999">特训班审核</span><svg class="x" style="left:115px" width="9" height="9" viewBox="0 0 9 9"><path d="M0.6 0.6 L8.2 8.2 M8.2 0.6 L0.6 8.2" stroke="#bdbdbd" stroke-width="1"/></svg></div><div class="tab" style="left:1326px;width:127px"><div class="d" style="background:#d2d2d2"></div><span class="t" style="color:#999">课程审核</span><svg class="x" style="left:101px" width="9" height="9" viewBox="0 0 9 9"><path d="M0.6 0.6 L8.2 8.2 M8.2 0.6 L0.6 8.2" stroke="#bdbdbd" stroke-width="1"/></svg></div><div class="tab" style="left:1453px;width:127px"><div class="d" style="background:#1e9fff"></div><span class="t" style="color:#666">课程预告</span><svg class="x" style="left:101px" width="9" height="9" viewBox="0 0 9 9"><path d="M0.6 0.6 L8.2 8.2 M8.2 0.6 L0.6 8.2" stroke="#bdbdbd" stroke-width="1"/></svg></div><div class="tab" style="left:1580px;width:46px"><svg class="a" style="left:24px;top:11px" width="9" height="14" viewBox="0 0 9 14"><path d="M1.6 1 L7.4 7 L1.6 13" fill="none" stroke="#333" stroke-width="1.4"/></svg></div><div class="tab" style="left:1626px;width:36px;border-right:0"><svg class="a" style="left:10px;top:13px" width="15" height="9" viewBox="0 0 15 9"><path d="M1 1 L7.4 7.4 L13.8 1" fill="none" stroke="#333" stroke-width="1.4"/></svg></div></div></div>
  <div id="card">
<div class="a" style="left:11px;top:19px;width:1610px;height:99px;border:1px solid #efefef"></div>
<div class="a" style="left:28px;top:11px;padding:0 3px 0 6px;background:#fff;font-size:14px;line-height:18px;color:#858585">搜索信息</div>
<div class="a" style="left:42px;top:55px;width:299px;height:37px;border:1px solid #f2f2f2;background:#fff"></div>
<div class="a" style="left:43px;top:56px;width:109px;height:35px;background:#fbfbfb;border-right:1px solid #f4f4f4;font-size:14px;color:#808080;line-height:35px;text-align:center">课程名称</div>
<div class="a" style="left:365px;top:55px;width:299px;height:37px;border:1px solid #f2f2f2;background:#fff"></div>
<div class="a" style="left:366px;top:56px;width:109px;height:35px;background:#fbfbfb;border-right:1px solid #f4f4f4;font-size:14px;color:#808080;line-height:35px;text-align:center">开课时间</div>
<div class="a" style="left:688px;top:55px;width:94px;height:37px;border:1px solid #d9d9d9;border-radius:2px;background:#fff"></div>
<svg class="a" style="left:709px;top:66px" width="16" height="16" viewBox="0 0 16 16"><circle cx="6.6" cy="6.4" r="5.3" fill="none" stroke="#7a7a7a" stroke-width="1.1"/><path d="M3.6 6 A3 3 0 0 1 6 3.4" fill="none" stroke="#7a7a7a" stroke-width="0.8"/><path d="M10.4 10.4 L14 14" stroke="#7a7a7a" stroke-width="1.6" stroke-linecap="round"/></svg>
<div class="a" style="left:730px;top:65px;font-size:14px;line-height:18px;color:#777;white-space:pre">搜 索</div>
<div class="a" style="left:11px;top:128px;width:1610px;height:382px;border:1px solid #efefef;background:#fff"></div>
<div class="a" style="left:12px;top:129px;width:1608px;height:59px;background:#fafafa"></div>
<div class="a" style="left:27px;top:139px;width:66px;height:38px;background:#4bb2ff;border-radius:2px;color:#fff;font-size:14px;line-height:39px;text-align:center;font-weight:bold">发布</div>
<div class="a" style="left:1469px;top:142px;width:26px;height:27px;border:1px solid #d2d2d2;background:#fafafa"></div>
<div class="a" style="left:1505px;top:142px;width:26px;height:27px;border:1px solid #d2d2d2;background:#fafafa"></div>
<div class="a" style="left:1541px;top:142px;width:26px;height:27px;border:1px solid #d2d2d2;background:#fafafa"></div>
<div class="a" style="left:1577px;top:142px;width:26px;height:27px;border:1px solid #d2d2d2;background:#fafafa"></div>
<svg class="a" style="left:1476px;top:148px" width="15" height="15" viewBox="0 0 15 15"><rect x="1.5" y="1.5" width="5" height="5" fill="none" stroke="#555" stroke-width="1"/><rect x="8.5" y="1.5" width="5" height="5" fill="none" stroke="#555" stroke-width="1"/><path d="M2.5 9 V14 M5.5 9 V14 M9.5 9 V14 M12.5 9 V14" stroke="#555" stroke-width="1"/></svg>
<svg class="a" style="left:1512px;top:148px" width="14" height="15" viewBox="0 0 14 15"><path d="M1 9.6 H12.6 L12 13.6 H1.8Z" fill="#555"/><path d="M2.6 9.4 V7.4 H6.4 V6 H11.6 V9.4" fill="none" stroke="#555" stroke-width="1"/><path d="M4.2 7.2 Q4.4 3.6 8 3.4" fill="none" stroke="#555" stroke-width="1.3"/><path d="M7.6 1.4 L10.6 3.4 L7.6 5.4Z" fill="#555"/></svg>
<svg class="a" style="left:1547px;top:148px" width="15" height="15" viewBox="0 0 15 15"><path d="M3.4 4.4 V2.4 Q3.4 0.8 5 0.8 H9.6 Q11.2 0.8 11.2 2.4 V4.4" fill="none" stroke="#4d4d4d" stroke-width="1.1"/><path d="M3.4 11.2 H2 Q0.8 11.2 0.8 10 V6 Q0.8 4.4 2.4 4.4 H12.2 Q13.8 4.4 13.8 6 V10 Q13.8 11.2 12.6 11.2 H11.2" fill="none" stroke="#4d4d4d" stroke-width="1.1"/><path d="M3.6 8.2 H11 V13.4 Q11 14 10.4 14 H4.2 Q3.6 14 3.6 13.4Z" fill="none" stroke="#4d4d4d" stroke-width="1.1"/></svg>
<svg class="a" style="left:1582px;top:147px" width="17" height="17" viewBox="0 0 17 17"><circle cx="8.6" cy="8.6" r="7.6" fill="none" stroke="#4d4d4d" stroke-width="1"/><path d="M8.6 7 V12.6" stroke="#4d4d4d" stroke-width="1.4"/><circle cx="8.6" cy="4.8" r="0.9" fill="#4d4d4d"/></svg>
<div class="a" style="left:12px;top:188px;width:1608px;height:38px;background:#fafafa;border-top:1px solid #f1f1f1;border-bottom:1px solid #f1f1f1"></div>
<div class="a" style="left:140px;top:188px;width:1px;height:272px;background:#f0f0f0"></div>
<div class="a" style="left:333px;top:188px;width:1px;height:272px;background:#f0f0f0"></div>
<div class="a" style="left:734px;top:188px;width:1px;height:272px;background:#f0f0f0"></div>
<div class="a" style="left:895px;top:188px;width:1px;height:272px;background:#f0f0f0"></div>
<div class="a" style="left:1088px;top:188px;width:1px;height:272px;background:#f0f0f0"></div>
<div class="a" style="left:1217px;top:188px;width:1px;height:272px;background:#f0f0f0"></div>
<div class="a" style="left:1346px;top:188px;width:1px;height:272px;background:#f0f0f0"></div>
<div class="a" style="left:12px;top:265px;width:1608px;height:1px;background:#f3f3f3"></div>
<div class="a" style="left:12px;top:304px;width:1608px;height:1px;background:#f3f3f3"></div>
<div class="a" style="left:12px;top:343px;width:1608px;height:1px;background:#f3f3f3"></div>
<div class="a" style="left:12px;top:382px;width:1608px;height:1px;background:#f3f3f3"></div>
<div class="a" style="left:12px;top:421px;width:1608px;height:1px;background:#f3f3f3"></div>
<div class="a" style="left:12px;top:460px;width:1608px;height:1px;background:#f3f3f3"></div>
<div class="a" style="left:40px;top:198px;font-size:14px;line-height:18px;color:#737373;white-space:nowrap">预告编号</div>
<svg class="a" style="left:107px;top:201px" width="11" height="12" viewBox="0 0 11 12"><path d="M0.4 5.2 L5.4 0.4 L10.4 5.2Z M0.4 6.8 L5.4 11.6 L10.4 6.8Z" fill="#c2c2c2"/></svg>
<div class="a" style="left:209px;top:198px;font-size:14px;line-height:18px;color:#737373;white-space:nowrap">课程名称</div>
<div class="a" style="left:506px;top:198px;font-size:14px;line-height:18px;color:#737373;white-space:nowrap">课程介绍</div>
<div class="a" style="left:779px;top:198px;font-size:14px;line-height:18px;color:#737373;white-space:nowrap">讲师姓名</div>
<svg class="a" style="left:846px;top:201px" width="11" height="12" viewBox="0 0 11 12"><path d="M0.4 5.2 L5.4 0.4 L10.4 5.2Z M0.4 6.8 L5.4 11.6 L10.4 6.8Z" fill="#c2c2c2"/></svg>
<div class="a" style="left:955px;top:198px;font-size:14px;line-height:18px;color:#737373;white-space:nowrap">开课时间</div>
<svg class="a" style="left:1023px;top:201px" width="11" height="12" viewBox="0 0 11 12"><path d="M0.4 5.2 L5.4 0.4 L10.4 5.2Z M0.4 6.8 L5.4 11.6 L10.4 6.8Z" fill="#c2c2c2"/></svg>
<div class="a" style="left:1107px;top:198px;font-size:14px;line-height:18px;color:#737373;white-space:nowrap">预计时长(小时)</div>
<div class="a" style="left:1254px;top:198px;font-size:14px;line-height:18px;color:#737373;white-space:nowrap">预告状态</div>
<div class="a" style="left:1469px;top:198px;font-size:14px;line-height:18px;color:#737373;white-space:nowrap">操作</div>
<div class="a" style="left:11px;top:237px;width:129px;text-align:center;font-size:14px;line-height:18px;color:#737373;white-space:nowrap">1</div>
<div class="a" style="left:156px;top:237px;font-size:14px;line-height:18px;color:#737373;white-space:nowrap">计算机二级Python备考...</div>
<div class="a" style="left:349px;top:237px;font-size:14px;line-height:18px;color:#737373;white-space:nowrap">Python是一种计算机程序设计语言。是一种面向对象的动...</div>
<div class="a" style="left:735px;top:237px;width:160px;text-align:center;font-size:14px;line-height:18px;color:#737373;white-space:nowrap">王立</div>
<div class="a" style="left:895px;top:237px;width:194px;text-align:center;font-size:14px;line-height:18px;color:#737373;white-space:nowrap">2022-06-23</div>
<div class="a" style="left:1089px;top:237px;width:128px;text-align:center;font-size:14px;line-height:18px;color:#737373;white-space:nowrap">18</div>
<div class="a" style="left:1254px;top:236px;width:56px;height:23px;border:1px solid #dcdcdc;border-radius:12px;background:#fff"></div>
<div class="a" style="left:1260px;top:239px;width:16px;height:16px;border-radius:50%;background:#d2d2d2"></div>
<div class="a" style="left:1280px;top:241px;font-size:12px;line-height:14px;color:#999">禁用</div>
<div class="a" style="left:1407px;top:234px;width:70px;height:26px;background:#4bb2ff;border-radius:2px;color:#fff;font-size:12px;line-height:30px;text-align:center;font-weight:bold">编辑信息</div>
<div class="a" style="left:1490px;top:234px;width:70px;height:26px;background:#ff794e;border-radius:2px;color:#fff;font-size:12px;line-height:30px;text-align:center;font-weight:bold">删除预告</div>
<div class="a" style="left:11px;top:276px;width:129px;text-align:center;font-size:14px;line-height:18px;color:#737373;white-space:nowrap">2</div>
<div class="a" style="left:156px;top:276px;font-size:14px;line-height:18px;color:#737373;white-space:nowrap">Excel实战：打造高质量...</div>
<div class="a" style="left:349px;top:276px;font-size:14px;line-height:18px;color:#737373;white-space:nowrap">学好Excel各项操作技巧可大幅提高工作效率，如果你经...</div>
<div class="a" style="left:735px;top:276px;width:160px;text-align:center;font-size:14px;line-height:18px;color:#737373;white-space:nowrap">凌祯</div>
<div class="a" style="left:895px;top:276px;width:194px;text-align:center;font-size:14px;line-height:18px;color:#737373;white-space:nowrap">2022-06-29</div>
<div class="a" style="left:1089px;top:276px;width:128px;text-align:center;font-size:14px;line-height:18px;color:#737373;white-space:nowrap">10.9</div>
<div class="a" style="left:1254px;top:275px;width:56px;height:23px;border:1px solid #dcdcdc;border-radius:12px;background:#fff"></div>
<div class="a" style="left:1260px;top:278px;width:16px;height:16px;border-radius:50%;background:#d2d2d2"></div>
<div class="a" style="left:1280px;top:280px;font-size:12px;line-height:14px;color:#999">禁用</div>
<div class="a" style="left:1407px;top:273px;width:70px;height:26px;background:#4bb2ff;border-radius:2px;color:#fff;font-size:12px;line-height:30px;text-align:center;font-weight:bold">编辑信息</div>
<div class="a" style="left:1490px;top:273px;width:70px;height:26px;background:#ff794e;border-radius:2px;color:#fff;font-size:12px;line-height:30px;text-align:center;font-weight:bold">删除预告</div>
<div class="a" style="left:11px;top:315px;width:129px;text-align:center;font-size:14px;line-height:18px;color:#737373;white-space:nowrap">3</div>
<div class="a" style="left:140px;top:315px;width:194px;text-align:center;font-size:14px;line-height:18px;color:#737373;white-space:nowrap">Vue基础特训营</div>
<div class="a" style="left:349px;top:315px;font-size:14px;line-height:18px;color:#737373;white-space:nowrap">Vue.Js是一套用于构建用户界面的渐进式JavaScript框架...</div>
<div class="a" style="left:735px;top:315px;width:160px;text-align:center;font-size:14px;line-height:18px;color:#737373;white-space:nowrap">吴海洋</div>
<div class="a" style="left:895px;top:315px;width:194px;text-align:center;font-size:14px;line-height:18px;color:#737373;white-space:nowrap">2022-06-30</div>
<div class="a" style="left:1089px;top:315px;width:128px;text-align:center;font-size:14px;line-height:18px;color:#737373;white-space:nowrap">10</div>
<div class="a" style="left:1254px;top:314px;width:56px;height:23px;border:1px solid #dcdcdc;border-radius:12px;background:#fff"></div>
<div class="a" style="left:1260px;top:317px;width:16px;height:16px;border-radius:50%;background:#d2d2d2"></div>
<div class="a" style="left:1280px;top:319px;font-size:12px;line-height:14px;color:#999">禁用</div>
<div class="a" style="left:1407px;top:312px;width:70px;height:26px;background:#4bb2ff;border-radius:2px;color:#fff;font-size:12px;line-height:30px;text-align:center;font-weight:bold">编辑信息</div>
<div class="a" style="left:1490px;top:312px;width:70px;height:26px;background:#ff794e;border-radius:2px;color:#fff;font-size:12px;line-height:30px;text-align:center;font-weight:bold">删除预告</div>
<div class="a" style="left:11px;top:354px;width:129px;text-align:center;font-size:14px;line-height:18px;color:#737373;white-space:nowrap">4</div>
<div class="a" style="left:140px;top:354px;width:194px;text-align:center;font-size:14px;line-height:18px;color:#737373;white-space:nowrap">Go语言基础</div>
<div class="a" style="left:349px;top:354px;font-size:14px;line-height:18px;color:#737373;white-space:nowrap">本课程将从基本语法讲起，逐渐深入，帮助同学深度理解...</div>
<div class="a" style="left:735px;top:354px;width:160px;text-align:center;font-size:14px;line-height:18px;color:#737373;white-space:nowrap">王立</div>
<div class="a" style="left:895px;top:354px;width:194px;text-align:center;font-size:14px;line-height:18px;color:#737373;white-space:nowrap">2022-06-29</div>
<div class="a" style="left:1089px;top:354px;width:128px;text-align:center;font-size:14px;line-height:18px;color:#737373;white-space:nowrap">18</div>
<div class="a" style="left:1254px;top:353px;width:56px;height:23px;border:1px solid #dcdcdc;border-radius:12px;background:#fff"></div>
<div class="a" style="left:1260px;top:356px;width:16px;height:16px;border-radius:50%;background:#d2d2d2"></div>
<div class="a" style="left:1280px;top:358px;font-size:12px;line-height:14px;color:#999">禁用</div>
<div class="a" style="left:1407px;top:351px;width:70px;height:26px;background:#4bb2ff;border-radius:2px;color:#fff;font-size:12px;line-height:30px;text-align:center;font-weight:bold">编辑信息</div>
<div class="a" style="left:1490px;top:351px;width:70px;height:26px;background:#ff794e;border-radius:2px;color:#fff;font-size:12px;line-height:30px;text-align:center;font-weight:bold">删除预告</div>
<div class="a" style="left:11px;top:393px;width:129px;text-align:center;font-size:14px;line-height:18px;color:#737373;white-space:nowrap">5</div>
<div class="a" style="left:156px;top:393px;font-size:14px;line-height:18px;color:#737373;white-space:nowrap">Vue实战-仿饿了么点餐...</div>
<div class="a" style="left:349px;top:393px;font-size:14px;line-height:18px;color:#737373;white-space:nowrap">如果你掌握了Vue基础，却在进阶之路上遇到了瓶颈，那...</div>
<div class="a" style="left:735px;top:393px;width:160px;text-align:center;font-size:14px;line-height:18px;color:#737373;white-space:nowrap">吴海洋</div>
<div class="a" style="left:895px;top:393px;width:194px;text-align:center;font-size:14px;line-height:18px;color:#737373;white-space:nowrap">2022-06-28</div>
<div class="a" style="left:1089px;top:393px;width:128px;text-align:center;font-size:14px;line-height:18px;color:#737373;white-space:nowrap">18</div>
<div class="a" style="left:1254px;top:392px;width:56px;height:23px;border:1px solid #dcdcdc;border-radius:12px;background:#fff"></div>
<div class="a" style="left:1260px;top:395px;width:16px;height:16px;border-radius:50%;background:#d2d2d2"></div>
<div class="a" style="left:1280px;top:397px;font-size:12px;line-height:14px;color:#999">禁用</div>
<div class="a" style="left:1407px;top:390px;width:70px;height:26px;background:#4bb2ff;border-radius:2px;color:#fff;font-size:12px;line-height:30px;text-align:center;font-weight:bold">编辑信息</div>
<div class="a" style="left:1490px;top:390px;width:70px;height:26px;background:#ff794e;border-radius:2px;color:#fff;font-size:12px;line-height:30px;text-align:center;font-weight:bold">删除预告</div>
<div class="a" style="left:11px;top:432px;width:129px;text-align:center;font-size:14px;line-height:18px;color:#737373;white-space:nowrap">6</div>
<div class="a" style="left:140px;top:432px;width:194px;text-align:center;font-size:14px;line-height:18px;color:#737373;white-space:nowrap">Web安全基础</div>
<div class="a" style="left:349px;top:432px;font-size:14px;line-height:18px;color:#737373;white-space:nowrap">课程内包含大量的实际项目案例，采用一讲一实战的教学...</div>
<div class="a" style="left:735px;top:432px;width:160px;text-align:center;font-size:14px;line-height:18px;color:#737373;white-space:nowrap">王立</div>
<div class="a" style="left:895px;top:432px;width:194px;text-align:center;font-size:14px;line-height:18px;color:#737373;white-space:nowrap">2022-06-28</div>
<div class="a" style="left:1089px;top:432px;width:128px;text-align:center;font-size:14px;line-height:18px;color:#737373;white-space:nowrap">18</div>
<div class="a" style="left:1254px;top:431px;width:56px;height:23px;border:1px solid #dcdcdc;border-radius:12px;background:#fff"></div>
<div class="a" style="left:1260px;top:434px;width:16px;height:16px;border-radius:50%;background:#d2d2d2"></div>
<div class="a" style="left:1280px;top:436px;font-size:12px;line-height:14px;color:#999">禁用</div>
<div class="a" style="left:1407px;top:429px;width:70px;height:26px;background:#4bb2ff;border-radius:2px;color:#fff;font-size:12px;line-height:30px;text-align:center;font-weight:bold">编辑信息</div>
<div class="a" style="left:1490px;top:429px;width:70px;height:26px;background:#ff794e;border-radius:2px;color:#fff;font-size:12px;line-height:30px;text-align:center;font-weight:bold">删除预告</div>
<div class="a" style="left:621px;top:473px;width:79px;height:25px;border:1px solid #efefef"></div>
<div class="a" style="left:630px;top:479px;font-size:12px;line-height:14px;white-space:pre;color:#333">10 条/页</div>
<svg class="a" style="left:682px;top:483px" width="11" height="7" viewBox="0 0 11 7"><path d="M1.2 1.2 L5.4 5.4 L9.6 1.2" fill="none" stroke="#333" stroke-width="2"/></svg>
<div class="a" style="left:710px;top:479px;font-size:12px;line-height:14px;white-space:pre;color:#555">共 6 条</div>
<svg class="a" style="left:766px;top:479px" width="9" height="13" viewBox="0 0 9 13"><path d="M7.6 0.8 L1.6 6.5 L7.6 12.2" fill="none" stroke="#d2d2d2" stroke-width="1.2"/></svg>
<div class="a" style="left:789px;top:473px;width:32px;height:26px;background:#33aba0;border-radius:2px;color:#fff;font-size:13px;font-weight:bold;line-height:26px;text-align:center">1</div>
<svg class="a" style="left:834px;top:479px" width="9" height="13" viewBox="0 0 9 13"><path d="M1.4 0.8 L7.4 6.5 L1.4 12.2" fill="none" stroke="#d2d2d2" stroke-width="1.2"/></svg>
<div class="a" style="left:858px;top:479px;font-size:12px;line-height:14px;white-space:pre;color:#999">到第</div>
<div class="a" style="left:893px;top:473px;width:40px;height:25px;border:1px solid #efefef;font-size:12px;line-height:23px;text-align:center;color:#333">1</div>
<div class="a" style="left:942px;top:479px;font-size:12px;line-height:14px;white-space:pre;color:#999">页</div>
<div class="a" style="left:965px;top:473px;width:46px;height:25px;border:1px solid #efefef;font-size:12px;line-height:27px;text-align:center;color:#333">确定</div>
</div>
</div>
<div id="rightbar"></div>
<div class="a" style="left:1777px;top:167px;width:95px;height:40px;background:#e9f6ff;border-top:1px solid #2b86d6;border-bottom:1px solid #2b86d6;border-radius:8px 0 0 8px;overflow:hidden">
  <div class="a" style="left:0;top:-1px;width:45px;height:40px;background:#0f90ff"></div>
  <svg class="a" style="left:9px;top:8px" width="27" height="23" viewBox="0 0 27 23"><circle cx="13.4" cy="6.6" r="4.4" fill="none" stroke="#fff" stroke-width="3"/><circle cx="5.8" cy="14.6" r="4.4" fill="none" stroke="#fff" stroke-width="3"/><path d="M8.6 17.8 Q11.6 11 16.2 11.2 Q20.4 11.4 20.6 15.2 Q20.6 19.2 16.8 19.4 Q15.2 19.4 14 18.4" fill="none" stroke="#fff" stroke-width="3"/><path d="M9.6 11.6 L11 10" stroke="#fff" stroke-width="3"/></svg>
  <div class="a" style="left:68px;top:10px;font-size:15px;line-height:18px;color:#2a9cf5;white-space:nowrap">拖拽</div>
</div>
<svg class="a" style="left:570px;top:421px" width="14" height="21" viewBox="0 0 14 21"><path d="M0.6 0.6 V17.4 L4.6 13.6 L7.4 19.8 L10 18.6 L7.4 12.8 L12.6 12.8 Z" fill="#fff" stroke="#000" stroke-width="1.1" stroke-linejoin="round"/></svg>
<div class="a" style="left:1856px;top:952px;width:16px;height:20px;background:#fff"></div>
<svg class="a" style="left:1858px;top:952px" width="14" height="20" viewBox="0 0 14 20"><path d="M2.4 3 V4.6 M2.4 7.6 V9.2 M2.4 12.2 V13.8 M2.4 16.8 V18.4" stroke="#9a9a9a" stroke-width="1.2"/><path d="M11 8 Q13 6.6 14 6.6 V20 H12.4Z" fill="#fb5a1a"/></svg>

</body></html>
